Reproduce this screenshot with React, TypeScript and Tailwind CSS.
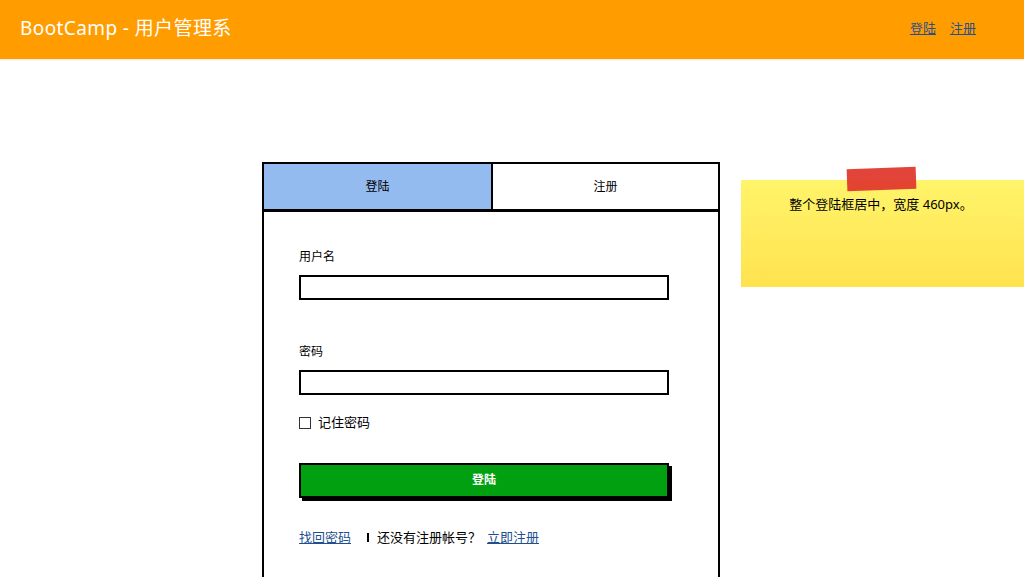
const font = { fontFamily: '"Noto Sans", "Noto Sans CJK SC", sans-serif' };

export default function App() {
  return (
    <div className="w-[1024px] h-[577px] bg-white overflow-hidden relative" style={font}>
      {/* header */}
      <div className="h-[59px] bg-[#ff9c00] flex items-center justify-between px-5 shadow-[0_1px_2px_rgba(0,0,0,0.1)]">
        <div className="text-white text-[19px] tracking-[0.4px] mt-[-3px]">BootCamp - 用户管理系</div>
        <div className="flex gap-[14px] mr-[28px] text-[13px] mt-[-1px]">
          <a className="text-[#2a4f8f] underline">登陆</a>
          <a className="text-[#2a4f8f] underline">注册</a>
        </div>
      </div>

      <div className="flex pt-[103px] pl-[262px]">
        {/* login box */}
        <div className="w-[458px] h-[420px] border-2 border-black border-b-0 bg-white flex flex-col">
          <div className="flex h-[48px] border-b-[3px] border-black">
            <div className="w-[229px] bg-[#94bbf0] border-r-2 border-black flex items-center justify-center text-[12px] text-black">
              登陆
            </div>
            <div className="flex-1 flex items-center justify-center text-[12px] text-black">注册</div>
          </div>
          <div className="px-[35px] pt-[37px] flex flex-col">
            <label className="text-[12px] text-black leading-[16px]">用户名</label>
            <div className="mt-[10px] w-[370px] h-[25px] border-2 border-black bg-white" />
            <label className="mt-[44px] text-[12px] text-black leading-[16px]">密码</label>
            <div className="mt-[10px] w-[370px] h-[25px] border-2 border-black bg-white" />
            <div className="mt-[18px] flex items-center gap-[7px] text-[13px] text-black">
              <span className="w-[12px] h-[12px] border border-[#333] bg-white" />
              <span>记住密码</span>
            </div>
            <div className="mt-[30px] w-[370px] h-[35px] bg-[#00a010] border-2 border-black shadow-[3px_3px_0_#000] flex items-center justify-center text-white text-[12px] font-bold">
              登陆
            </div>
            <div className="mt-[30px] flex items-center text-[13px] text-black">
              <a className="text-[#1f4f8f] underline">找回密码</a>
              <span className="ml-[16px] w-[2px] h-[9px] bg-black" />
              <span className="ml-[8px]">还没有注册帐号？</span>
              <a className="ml-[6px] text-[#1f4f8f] underline">立即注册</a>
            </div>
          </div>
        </div>

        {/* sticky note */}
        <div className="relative ml-[21px] mt-[18px] w-[283px] h-[107px] bg-[#ffe455] bg-gradient-to-b from-[#fff46a] to-[#ffe24e]">
          <div className="absolute left-[106px] top-[-12px] w-[69px] h-[22px] bg-[#e03a2e] rotate-[-2deg] opacity-95" />
          <div className="pt-[15px] text-center text-[13px] text-black pr-[3px]">整个登陆框居中，宽度 460px。</div>
        </div>
      </div>
    </div>
  );
}
